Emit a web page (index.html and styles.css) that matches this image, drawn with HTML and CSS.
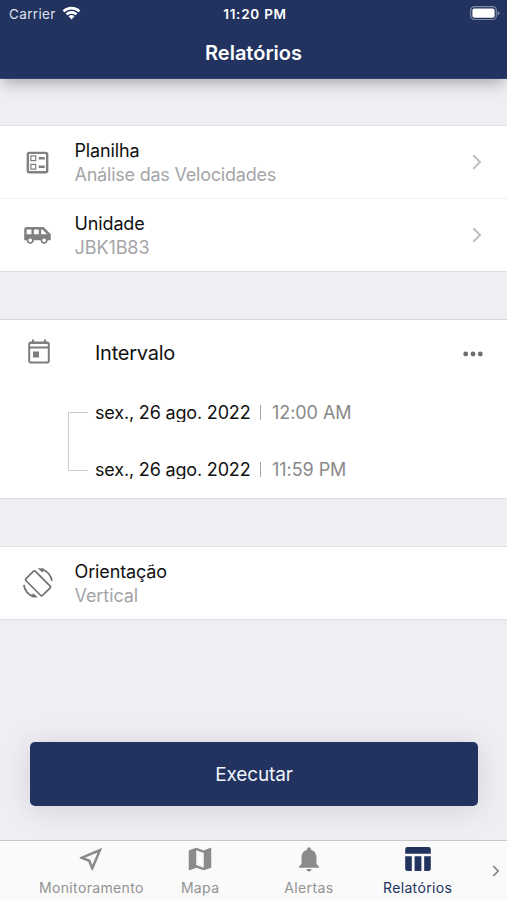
FILE: index.html
```html
<!DOCTYPE html>
<html lang="pt-BR">
<head>
<meta charset="utf-8">
<meta name="viewport" content="width=device-width, initial-scale=1">
<title>Relatórios</title>
<link rel="stylesheet" href="styles.css">
</head>
<body>
<div class="app">
  <header class="header">
    <div class="status">
      <div class="carrier"><span>Carrier</span>
        <svg class="wifi" viewBox="0 0 19 14"><path d="M0.6 4.4a12.8 12.8 0 0 1 17.8 0l-1.8 1.9a10.2 10.2 0 0 0-14.2 0zM3.6 7.4a8.6 8.6 0 0 1 11.8 0l-1.8 1.9a6 6 0 0 0-8.2 0zM6.5 10.3a4.4 4.4 0 0 1 6 0l-3 3.1z"/></svg>
      </div>
      <time class="clock">11:20 PM</time>
      <svg class="battery" viewBox="0 0 30 15"><rect x=".7" y=".7" width="25.6" height="12.8" rx="3.6" fill="none" stroke="#7d87a3" stroke-width="1.2"/><rect x="2.4" y="2.4" width="22.2" height="9.4" rx="2" fill="#fff"/><path d="M27.6 5v4.4q2-.8 2-2.2t-2-2.2z" fill="#7d87a3"/></svg>
    </div>
    <h1 class="title">Relatórios</h1>
  </header>

  <main class="content">
    <section class="group">
      <div class="row">
        <svg class="row-icon" viewBox="0 0 24 24"><path d="M13 7.500h5v2h-5zm0 7h5v2h-5zM19 3H5c-1.100 0-2 .9-2 2v14c0 1.100.9 2 2 2h14c1.100 0 2-.9 2-2V5c0-1.100-.9-2-2-2zm0 16H5V5h14v14zM11 6H6v5h5V6zm-1 4H7V7h3v3zm1 3H6v5h5v-5zm-1 4H7v-3h3v3z"/></svg>
        <div class="row-text"><div class="label">Planilha</div><div class="value velocity">Análise das Velocidades</div></div>
        <svg class="chevron" viewBox="0 0 10 16"><path d="M1.300 1.300 8 8l-6.700 6.700"/></svg>
      </div>
      <div class="row">
        <svg class="row-icon" viewBox="0 0 24 24"><path d="M17 5H3c-1.100 0-2 .89-2 2v9h2c0 1.650 1.340 3 3 3s3-1.350 3-3h5.500c0 1.650 1.340 3 3 3s3-1.350 3-3H23v-5l-6-6zM3 11V7h4v4H3zm3 6.500c-.83 0-1.500-.67-1.500-1.500s.67-1.500 1.500-1.500 1.500.67 1.500 1.500-.67 1.500-1.500 1.500zm7-6.500H9V7h4v4zm4.500 6.500c-.83 0-1.500-.67-1.500-1.500s.67-1.500 1.500-1.500 1.500.67 1.500 1.500-.67 1.500-1.500 1.500zM15 11V7h1l4 4h-5z"/></svg>
        <div class="row-text"><div class="label">Unidade</div><div class="value plate">JBK1B83</div></div>
        <svg class="chevron" viewBox="0 0 10 16"><path d="M1.300 1.300 8 8l-6.700 6.700"/></svg>
      </div>
    </section>

    <section class="group interval">
      <div class="interval-head">
        <svg class="calendar" viewBox="0 0 24 26"><path fill-rule="evenodd" d="M5 .5h2v2h10v-2h2v2h1a2.800 2.800 0 0 1 2.800 2.800v16.400a2.800 2.800 0 0 1-2.800 2.800H4a2.800 2.800 0 0 1-2.800-2.800V5.300a2.800 2.800 0 0 1 2.800-2.800h1zM3.200 5v2.600h17.600V5zM3.200 9.600v12.900h17.600V9.600zM6 12.600h6v6H6z"/></svg>
        <h2 class="interval-title">Intervalo</h2>
        <svg class="more" viewBox="0 0 20 6"><circle cx="2.700" cy="3" r="2.400"/><circle cx="10" cy="3" r="2.400"/><circle cx="17.300" cy="3" r="2.400"/></svg>
      </div>
      <div class="range">
        <div class="bracket"></div>
        <div class="dates">
          <div class="date-row"><span class="date">sex., 26 ago. 2022</span><i class="bar"></i><span class="time">12:00 AM</span></div>
          <div class="date-row"><span class="date">sex., 26 ago. 2022</span><i class="bar"></i><span class="time">11:59 PM</span></div>
        </div>
      </div>
    </section>

    <section class="group">
      <div class="row">
        <svg class="row-icon rotate" viewBox="0 0 30 30"><g fill="none" stroke="#707070" stroke-width="1.700"><path d="M10.600 3.200q.8-.8 1.600 0L27.200 18.200q.8.800 0 1.600l-7.800 7.700q-.8.800-1.600 0L2.800 12.500q-.8-.8 0-1.600z"/><path d="M18.500 1.400C24 2.500 28.300 7.500 28.900 13M11 28.400C5.500 27.300 1.300 22.500.9 16.900"/></g><path fill="#707070" d="M14.500.3l6.800.3-1.800 3.900zM15 29.500l-6.800-.3 1.800-3.900z"/></svg>
        <div class="row-text"><div class="label orient">Orientação</div><div class="value vertical">Vertical</div></div>
      </div>
    </section>

    <button class="run" type="button">Executar</button>
  </main>

  <nav class="tabs">
    <a class="tab"><svg viewBox="0 0 24 24"><path d="M17.270 6.730l-4.240 10.130-1.320-3.420-.32-.83-.82-.32-3.430-1.330 10.130-4.230M21 3L3 10.530v.98l6.840 2.650L12.480 21h.98L21 3z"/></svg><span class="t-monitor">Monitoramento</span></a>
    <a class="tab"><svg viewBox="0 0 24 24"><path d="M20.500 3l-.16.030L15 5.100 9 3 3.360 4.900c-.21.070-.36.250-.36.480V20.500c0 .28.220.5.500.5l.16-.03L9 18.900l6 2.100 5.640-1.900c.21-.07.360-.25.360-.48V3.500c0-.28-.22-.5-.5-.5zM15 19l-6-2.110V5l6 2.110V19z"/></svg><span class="t-map">Mapa</span></a>
    <a class="tab"><svg viewBox="0 0 24 24"><path d="M12 22c1.100 0 2-.9 2-2h-4c0 1.100.89 2 2 2zm6-6v-5c0-3.070-1.640-5.640-4.500-6.320V4c0-.83-.67-1.500-1.500-1.500s-1.500.67-1.500 1.500v.68C7.630 5.360 6 7.920 6 11v5l-2 2v1h16v-1l-2-2z"/></svg><span class="t-alert">Alertas</span></a>
    <a class="tab active"><svg viewBox="0 0 30 30"><path d="M4.500 3h21a2.300 2.300 0 0 1 2.300 2.300v4.400H2.200V5.300A2.300 2.300 0 0 1 4.500 3zM2.200 12.300h6.600V27H4.500a2.300 2.300 0 0 1-2.300-2.300zM11.600 12.300h6.800V27h-6.800zM21.200 12.300h6.600v12.400a2.300 2.300 0 0 1-2.300 2.300h-4.300z"/></svg><span class="t-report">Relatórios</span></a>
    <svg class="next" viewBox="0 0 8 12"><path d="M1.200 1 6.200 6l-5 5"/></svg>
  </nav>
</div>
</body>
</html>
```

FILE: styles.css
```css
* { box-sizing: border-box; }

body {
  margin: 0;
  background: #eeeef3;
  font-family: Inter, "Liberation Sans", sans-serif;
  color: #111;
}

svg { display: block; flex: none; }
span { white-space: nowrap; }

.app {
  width: 507px;
  height: 900px;
  display: flex;
  flex-direction: column;
  overflow: hidden;
}

.header {
  height: 79px;
  flex: none;
  background: #223360;
  color: #fff;
  border-bottom: 1px solid #2f4775;
  box-shadow: 0 7px 14px -3px rgba(60, 50, 60, .38);
}

.status {
  height: 27px;
  padding: 0 7px 0 9px;
  display: grid;
  grid-template-columns: 1fr auto 1fr;
  align-items: center;
}

.carrier {
  display: flex;
  align-items: center;
  gap: 6px;
  font-size: 13.500px;
  letter-spacing: .35px;
  color: #dfe3ee;
}

.wifi { width: 19px; height: 14px; margin-top: -1px; fill: #fff; }
.clock { font-size: 13.500px; font-weight: 600; letter-spacing: .75px; margin-right: -1px; }
.battery { width: 30px; height: 15px; justify-self: end; }

.title {
  margin: 0;
  height: 51px;
  line-height: 52px;
  text-align: center;
  font-size: 20px;
  font-weight: 600;
}

.content {
  flex: 1;
  display: flex;
  flex-direction: column;
  gap: 47px;
  padding-top: 46px;
}

.group {
  background: #fff;
  border-top: 1px solid #e3e3e7;
  border-bottom: 1px solid #dedee2;
}

.row {
  height: 72px;
  display: flex;
  align-items: center;
  padding: 0 25px 0 23px;
}

.row + .row { height: 73px; border-top: 1px solid #f0f0f2; }
.row-icon { width: 29px; height: 29px; fill: #808080; margin-right: 22.500px; }
.row-icon.rotate { width: 30px; height: 30px; margin: 0 21.500px 1px 0; }
.row-text { flex: 1; }
.label { font-size: 18px; line-height: 25px; letter-spacing: -.13px; }
.value { font-size: 18px; line-height: 24px; color: #a5a5a7; letter-spacing: -.08px; }
.velocity { letter-spacing: -.22px; }
.chevron { width: 10px; height: 16px; fill: none; stroke: #bebebe; stroke-width: 2; }

.interval { height: 180px; border-top-color: #d5d5d9; }

.interval-head {
  height: 67px;
  padding: 0 24px 0 27px;
  display: flex;
  align-items: center;
}

.calendar { width: 24px; height: 26px; margin-bottom: 4px; fill: #7d7d7d; }
.interval-title { margin: 0 0 1px 44px; flex: 1; font-size: 20px; font-weight: 400; letter-spacing: -.25px; }
.more { width: 20px; height: 6px; fill: #6e6e6e; }
.range { display: flex; padding: 14px 0 0 68px; }

.bracket {
  width: 20px;
  height: 59px;
  margin-top: 11px;
  border: 1px solid #ccc;
  border-right: 0;
}

.dates { margin-left: 7px; display: flex; flex-direction: column; gap: 35px; }
.date-row { height: 22px; display: flex; align-items: center; font-size: 18px; line-height: 22px; }
.date { width: 165px; height: 19px; line-height: 20px; overflow: hidden; letter-spacing: -.17px; }
.bar { width: 1px; height: 15px; background: #a5a5a5; }
.time { margin-left: 11px; padding-top: 1px; color: #898989; letter-spacing: -.06px; }

.run {
  width: 448px;
  height: 64px;
  margin: 75px 0 0 30px;
  border: 0;
  border-radius: 5px;
  background: #223360;
  color: #f0f3fa;
  font: 400 19px Inter, sans-serif;
  letter-spacing: -.15px;
  box-shadow: 0 3px 28px rgba(50, 50, 70, .15);
}

.tabs {
  position: relative;
  height: 60px;
  flex: none;
  display: flex;
  padding: 0 35px 0 37px;
  border-top: 1px solid #c8c8cc;
  background: #fafafa;
}

.tab {
  flex: 1;
  display: flex;
  flex-direction: column;
  align-items: center;
  padding-top: 3px;
  color: #929292;
  font-size: 14px;
  letter-spacing: .35px;
}

.tab svg { width: 30px; height: 30px; fill: #8b8b8b; }
.tab span { line-height: 18px; margin-top: 5px; }
.tab.active { color: #223360; }
.tab.active svg { fill: #223360; }

.next {
  position: absolute;
  left: 492px;
  top: 24px;
  width: 8px;
  height: 12px;
  fill: none;
  stroke: #808080;
  stroke-width: 1.700;
}
```
